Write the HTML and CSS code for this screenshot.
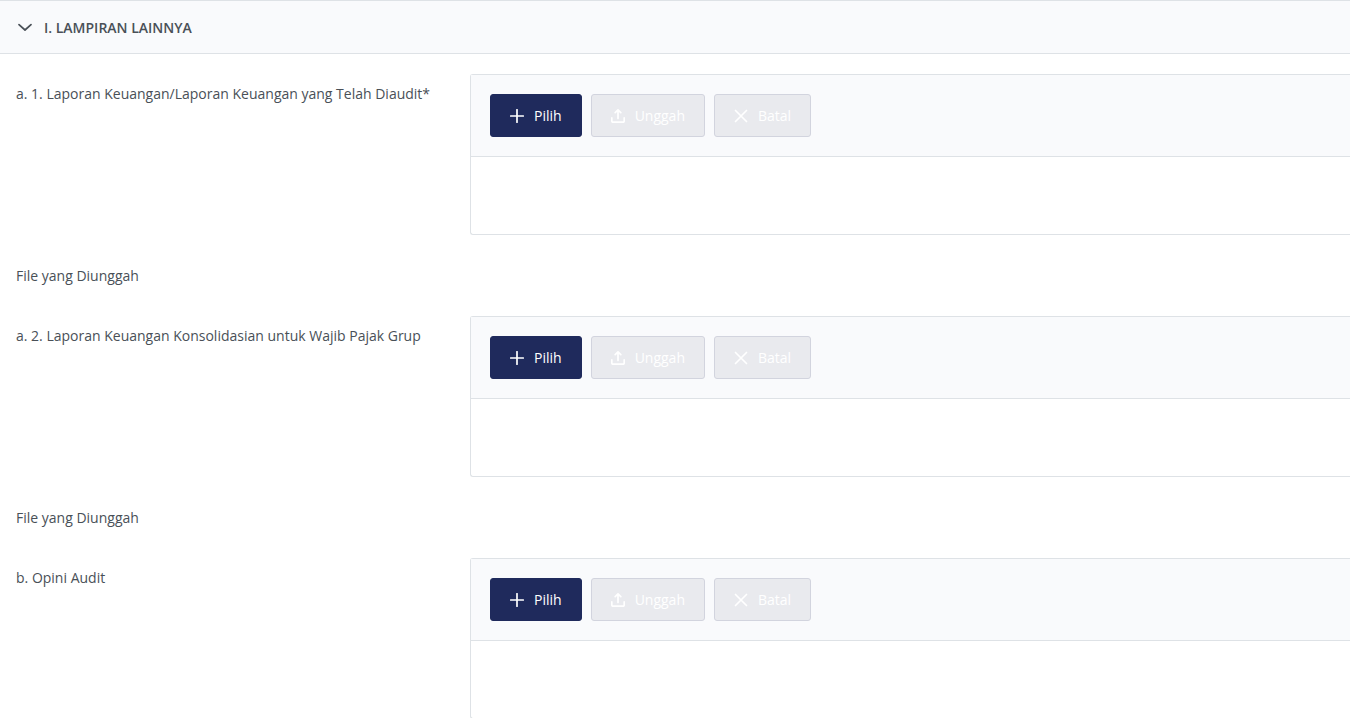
FILE: index.html
```html
<!DOCTYPE html>
<html lang="id">
<head>
    <meta charset="UTF-8">
    <meta name="viewport" content="width=device-width, initial-scale=1.0">
    <title>Lampiran Lainnya</title>
    <link rel="stylesheet" href="styles.css">
</head>
<body>
    <!-- icons -->
    <svg class="icon-defs" aria-hidden="true">
        <symbol id="icon-plus" viewBox="0 0 14 14"><path d="M7 0.7V13.3M0.7 7H13.3"/></symbol>
        <symbol id="icon-upload" viewBox="0 0 14 14"><path d="M7 9.5V1.2M4.2 3.6L7 0.9L9.8 3.6M0.8 8.8V12Q0.8 13.2 2 13.2H12Q13.2 13.2 13.2 12V8.8"/></symbol>
        <symbol id="icon-times" viewBox="0 0 14 14"><path d="M1.5 1.5L12.5 12.5M12.5 1.5L1.5 12.5"/></symbol>
        <symbol id="icon-chevron" viewBox="0 0 14 14"><path d="M1 3.6L7 9L13 3.6"/></symbol>
    </svg>

    <section class="panel">
        <h2 class="panel-title">
            <button type="button" class="panel-toggle" aria-expanded="true">
                <svg class="icon"><use href="#icon-chevron"/></svg>
                <span>I. LAMPIRAN LAINNYA</span>
            </button>
        </h2>

        <div class="panel-content">
            <div class="field">
                <div class="field-label" id="label-a1">a. 1. Laporan Keuangan/Laporan Keuangan yang Telah Diaudit*</div>
                <div class="upload" role="group" aria-labelledby="label-a1">
                    <div class="upload-bar">
                        <button type="button" class="btn"><svg class="icon"><use href="#icon-plus"/></svg>Pilih</button>
                        <button type="button" class="btn" disabled><svg class="icon"><use href="#icon-upload"/></svg>Unggah</button>
                        <button type="button" class="btn" disabled><svg class="icon"><use href="#icon-times"/></svg>Batal</button>
                    </div>
                    <div class="upload-content"></div>
                </div>
            </div>
            <div class="uploaded">File yang Diunggah</div>

            <div class="field">
                <div class="field-label" id="label-a2">a. 2. Laporan Keuangan Konsolidasian untuk Wajib Pajak Grup</div>
                <div class="upload" role="group" aria-labelledby="label-a2">
                    <div class="upload-bar">
                        <button type="button" class="btn"><svg class="icon"><use href="#icon-plus"/></svg>Pilih</button>
                        <button type="button" class="btn" disabled><svg class="icon"><use href="#icon-upload"/></svg>Unggah</button>
                        <button type="button" class="btn" disabled><svg class="icon"><use href="#icon-times"/></svg>Batal</button>
                    </div>
                    <div class="upload-content"></div>
                </div>
            </div>
            <div class="uploaded">File yang Diunggah</div>

            <div class="field">
                <div class="field-label" id="label-b">b. Opini Audit</div>
                <div class="upload" role="group" aria-labelledby="label-b">
                    <div class="upload-bar">
                        <button type="button" class="btn"><svg class="icon"><use href="#icon-plus"/></svg>Pilih</button>
                        <button type="button" class="btn" disabled><svg class="icon"><use href="#icon-upload"/></svg>Unggah</button>
                        <button type="button" class="btn" disabled><svg class="icon"><use href="#icon-times"/></svg>Batal</button>
                    </div>
                    <div class="upload-content"></div>
                </div>
            </div>
        </div>
    </section>
</body>
</html>
```
FILE: styles.css
```css
* {
    box-sizing: border-box;
}

body {
    margin: 0;
    font-family: "Segoe UI", "Open Sans", "Noto Sans", sans-serif;
    font-size: 14px;
    line-height: 20px;
    color: #495057;
    background-color: #fff;
}

.icon-defs {
    display: none;
}

.icon {
    width: 14px;
    height: 14px;
    flex-shrink: 0;
    fill: none;
    stroke: currentColor;
    stroke-width: 1.7;
    stroke-linecap: round;
    stroke-linejoin: round;
}

/* panel header */
.panel-title {
    margin: 0;
}

.panel-toggle {
    display: flex;
    align-items: center;
    gap: 12px;
    width: 100%;
    padding: 17px 18px 15px;
    border: 0;
    border-top: 1px solid #dee2e6;
    border-bottom: 1px solid #dee2e6;
    background-color: #f9fafc;
    color: #495057;
    font-family: inherit;
    font-size: 14px;
    font-weight: 600;
    line-height: 20px;
    text-align: left;
    cursor: pointer;
}

.panel-content {
    padding: 20px 0 0 16px;
}

/* label + upload box */
.field {
    display: grid;
    grid-template-columns: 454px 1fr;
}

.field-label {
    padding-top: 10px;
}

.uploaded {
    padding: 31px 0 30px;
}

.upload {
    border: 1px solid #dee2e6;
    border-right: 0;
    border-radius: 3px 0 0 3px;
}

.upload-bar {
    display: flex;
    gap: 9px;
    padding: 19px;
    border-bottom: 1px solid #dee2e6;
    background-color: #f9fafc;
}

.upload-content {
    height: 77px;
}

.btn {
    display: flex;
    align-items: center;
    gap: 10px;
    height: 43px;
    padding: 0 19px;
    border: 1px solid #1f2a5c;
    border-radius: 3px;
    background-color: #1f2a5c;
    color: #fff;
    font-family: inherit;
    font-size: 14px;
    line-height: 20px;
    cursor: pointer;
}

.btn:disabled {
    border-color: #d2d4de;
    background-color: #e9eaee;
    color: #fff;
    cursor: default;
}
```
